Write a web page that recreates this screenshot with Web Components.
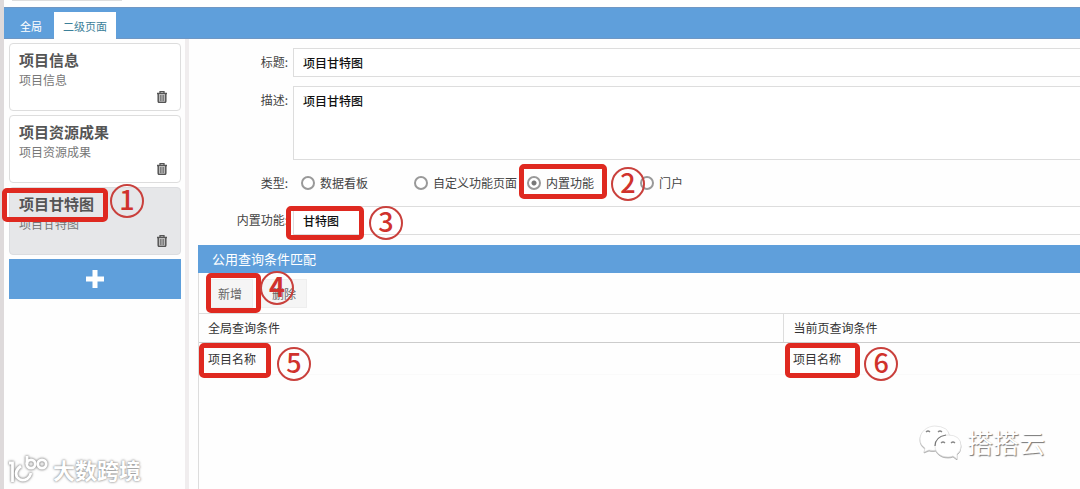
<!DOCTYPE html>
<html lang="zh-CN">
<head>
<meta charset="utf-8">
<title>二级页面</title>
<style>
  body { margin: 0; background: #fefefe; font-family: "Noto Sans CJK SC", "Liberation Sans", sans-serif; font-size: 12px; color: #444; }
</style>
</head>
<body>
<page-designer></page-designer>
<script>
const define = (name, html, setup) => customElements.define(name, class extends HTMLElement {
  constructor() {
    super();
    const t = document.createElement('template');
    t.innerHTML = '<style>*{box-sizing:border-box} button,input,textarea{font:inherit;color:inherit;margin:0}</style>' + html;
    this.attachShadow({ mode: 'open' }).append(t.content.cloneNode(true));
  }
  connectedCallback() { if (setup) setup(this, this.shadowRoot); }
});

define('tab-bar', `
  <style>
    :host { display: flex; height: 32px; padding: 4px 0 0 4px; background: #5f9fdb; border-top: 1px solid #6f97c4; border-bottom: 1px solid #6f97c4; box-sizing: border-box; font-size: 11px; }
    button { border: 0; background: none; color: #fff; padding: 0 12px; height: 27px; line-height: 26px; white-space: nowrap; }
    button[aria-selected=true] { background: #fff; color: #3c8099; padding: 0 9px; }
    div { display: flex; }
  </style>
  <div role="tablist"><button role="tab">全局</button><button role="tab" aria-selected="true">二级页面</button></div>`);

define('page-card', `
  <style>
    :host { display: block; height: 68px; box-sizing: border-box; border: 1px solid #ddd; border-radius: 4px; padding: 6px 9px; background: #fff; }
    :host([selected]) { background: #e6e7e9; border-color: #dcdde0; }
    h3 { margin: 0; font-size: 15px; line-height: 20px; font-weight: 700; color: #555; }
    p { margin: 0; line-height: 20px; color: #777; }
    footer { display: flex; justify-content: flex-end; height: 14px; padding-right: 4px; }
    button { border: 0; padding: 0; background: none; display: flex; align-items: center; }
    svg { display: block; }
  </style>
  <h3></h3><p></p>
  <footer><button aria-label="删除页面"><svg width="10" height="12" viewBox="0 0 10 12" fill="none" stroke="#555"><path d="M0 2.500h10M3 2V.7h4V2" stroke-width="1.300"/><path d="M1.200 3v7.300q0 1.100 1 1.100h5.600q1 0 1-1.100V3" fill="#bbb" stroke-width="1.500"/><path d="M3.500 4v6M5 4v6M6.500 4v6" stroke="#777" stroke-width=".9"/></svg></button></footer>`,
  (el, r) => { r.querySelector('h3').textContent = r.querySelector('p').textContent = el.getAttribute('label'); });

define('page-list', `
  <style>
    :host { display: flex; flex-direction: column; gap: 4px; flex: none; width: 185px; padding: 4px 4px 0 5px; box-sizing: border-box; border-right: 4px solid #f0edee; background: #fefefe; }
    button { height: 40px; border: 0; padding: 0; background: #5f9fdb; display: flex; align-items: center; justify-content: center; }
  </style>
  <slot></slot>
  <button aria-label="新增页面"><svg width="18" height="18" viewBox="0 0 18 18"><path d="M6.500 0h5v6.500H18v5h-6.500V18h-5v-6.500H0v-5h6.500z" fill="#fff"/></svg></button>`);

define('form-row', `
  <style>
    :host { display: flex; align-items: flex-start; padding-left: 9px; }
    label, .label { flex: none; width: 90px; margin-right: 5px; text-align: right; line-height: 28px; color: #444; }
    .body { flex: 1; min-width: 0; display: flex; }
    input, textarea { display: block; width: 100%; border: 1px solid #ddd; border-right: 0; border-radius: 0; background: #fff; color: #111; padding: 0 9px; height: 29px; outline: 0; resize: none; font-weight: 500; }
    textarea { height: 74px; padding: 5px 9px; line-height: 18px; overflow: hidden; }
  </style>
  <label for="f"></label><div class="body"><slot></slot></div>`,
  (el, r) => {
    const kind = el.getAttribute('kind'), label = r.querySelector('label');
    label.textContent = el.getAttribute('label') + ':';
    if (!kind) { const s = document.createElement('span'); s.className = 'label'; s.textContent = label.textContent; label.replaceWith(s); return; }
    const f = document.createElement(kind);
    f.id = 'f'; f.value = el.getAttribute('value');
    r.querySelector('.body').replaceChildren(f);
  });

define('type-options', `
  <style>
    :host { display: flex; height: 28px; align-items: center; padding-left: 8px; }
    label { display: flex; align-items: center; gap: 5px; width: 113px; line-height: 18px; white-space: nowrap; color: #444; }
    input { appearance: none; flex: none; width: 14px; height: 14px; border: 2px solid #999; border-radius: 50%; background: #fff; }
    input:checked { background: radial-gradient(circle, #777 0 2px, #fff 3px); }
  </style>
  <label><input type="radio" name="type">数据看板</label>
  <label><input type="radio" name="type">自定义功能页面</label>
  <label><input type="radio" name="type" checked>内置功能</label>
  <label><input type="radio" name="type">门户</label>`);

define('query-grid', `
  <style>
    :host { display: flex; flex-direction: column; flex: 1; margin: 10px 0 0 9px; border-left: 1px solid #ddd; }
    h2 { margin: 0 0 0 -1px; padding-left: 14px; height: 28px; line-height: 28px; font-size: 13px; font-weight: 400; color: #fff; background: #5f9fdb; }
    .tools { display: flex; gap: 8px; padding: 6px 8px 5px; height: 40px; }
    button { border: 1px solid #eee; background: #f5f5f5; padding: 0 10px; width: 46px; color: #666; white-space: nowrap; }
    table { border-collapse: collapse; table-layout: fixed; width: 100%; }
    th, td { text-align: left; font-weight: 400; padding: 0 9px; line-height: 18px; color: #333; }
    th { height: 29px; border-top: 1px solid #ddd; border-bottom: 1px solid #ccc; }
    th:first-child { width: 66.4%; }
    th + th { border-left: 1px solid #ddd; }
    td { height: 32px; border-bottom: 1px solid #fafafa; }
  </style>
  <h2>公用查询条件匹配</h2>
  <div class="tools"><button>新增</button><button>删除</button></div>
  <table>
    <thead><tr><th scope="col">全局查询条件</th><th scope="col">当前页查询条件</th></tr></thead>
    <tbody><tr><td>项目名称</td><td>项目名称</td></tr></tbody>
  </table>`);

/* Tutorial marker: a red frame over its target, with a circled step number beside it */
define('step-mark', `
  <style>
    :host { position: absolute; pointer-events: none; box-sizing: border-box; border: 5px solid #df2920; border-radius: 5px; }
    span { position: absolute; box-sizing: border-box; width: 34px; height: 34px; border: 2px solid #c9403c; border-radius: 50%; text-align: center; font-size: 27px; line-height: 26px; font-weight: 500; color: #d0322c; }
  </style>
  <span></span>`,
  (el, r) => {
    const [x, y, w, h, cx, cy] = el.getAttribute('at').split(' ');
    Object.assign(el.style, { left: el.getAttribute('left') || x + 'px', top: y + 'px', width: w + 'px', height: h + 'px' });
    const s = r.querySelector('span');
    s.textContent = el.getAttribute('step');
    s.style.left = cx - x - 22 + 'px';
    s.style.top = cy - y - 22 + 'px';
    if (el.hasAttribute('bold')) s.style.fontWeight = 700;
  });

define('corner-mark', `
  <style>
    :host { position: absolute; display: flex; align-items: center; pointer-events: none; white-space: nowrap; color: #fff; }
    :host([kind=left]) { left: 9px; bottom: 4px; gap: 4px; font-size: 22px; line-height: 32px; font-weight: 700; text-shadow: 0 0 2px #888, 0 0 3px #aaa; }
    :host([kind=right]) { right: 35px; bottom: 29px; gap: 5px; font-size: 26px; line-height: 36px; text-shadow: 1px 1px 1px #777; }
    svg { overflow: visible; }
  </style>
  <slot></slot>`);

define('page-designer', `
  <style>
    :host { display: flex; flex-direction: column; position: relative; min-height: 100vh; box-sizing: border-box; padding: 7px 0 0 4px; background: linear-gradient(#dedadb, #dedadb) left / 4px 100% no-repeat; overflow: hidden; }
    main { display: flex; flex: 1; }
    section { flex: 1; min-width: 0; display: flex; flex-direction: column; padding-top: 9px; }
    form-row { margin-bottom: 9px; }
    form-row.last { margin-bottom: 0; }
    .edge { position: absolute; left: 12px; top: 0; width: 110px; height: 1px; background: #ddd; }
    .layer { position: absolute; inset: 0; pointer-events: none; }
  </style>
  <div class="edge"></div>
  <tab-bar></tab-bar>
  <main>
    <page-list>
      <page-card label="项目信息"></page-card>
      <page-card label="项目资源成果"></page-card>
      <page-card label="项目甘特图" selected></page-card>
    </page-list>
    <section>
      <form-row label="标题" kind="input" value="项目甘特图"></form-row>
      <form-row label="描述" kind="textarea" value="项目甘特图"></form-row>
      <form-row label="类型"><type-options></type-options></form-row>
      <form-row label="内置功能" kind="input" value="甘特图" class="last"></form-row>
      <query-grid></query-grid>
    </section>
  </main>
  <div class="layer">
    <step-mark step="1" at="2 188 106 34 127 201"></step-mark>
    <step-mark step="2" at="519 164 88 35 628 184"></step-mark>
    <step-mark step="3" at="286 206 78 34 386 223"></step-mark>
    <step-mark step="4" at="206 273 55 40 277 288" bold></step-mark>
    <step-mark step="5" at="199 343 72 35 294 364"></step-mark>
    <step-mark step="6" at="785 343 75 35 881 364" left="calc(66.4% + 68px)"></step-mark>
    <corner-mark kind="left">
      <svg width="40" height="28" viewBox="0 0 40 28" fill="none" stroke="#fff" stroke-width="2.800" style="filter:drop-shadow(0 0 1px #888) drop-shadow(0 0 1px #bbb)"><path d="M0 8h3.500V27M12 11Q5 16 8 22 12 27 18 24 21 22 22 18M18 1v8"/><circle cx="22" cy="9" r="4.200"/><circle cx="33" cy="9" r="4.200"/></svg>大数跨境
    </corner-mark>
    <corner-mark kind="right">
      <svg width="43" height="34" viewBox="0 0 43 34" fill="#fff" stroke="#ddd" stroke-width=".7" style="filter:drop-shadow(0 1px 0 #aaa)"><path d="M16 1C8 1 1 7 1 14q0 6 5 9l-1 4 5-2q4 1 7 0 9-1 13-8 2-8-3-13-5-3-11-3z"/><path d="M29 10C21 10 16 15 16 21S21 32 29 32q3 0 5-1l4 3 0-5Q42 26 42 21 42 10 29 10z"/><path d="M16 21Q16 12 27 10" fill="none" stroke="#777" stroke-width="1.200"/><path d="M7 7q2-2 4 0M19 7q2-2 4 0M22 18q2-2 4 0M32 18q2-2 4 0" fill="none" stroke="#888" stroke-width="1.200"/></svg>搭搭云
    </corner-mark>
  </div>`);
</script>
</body>
</html>
